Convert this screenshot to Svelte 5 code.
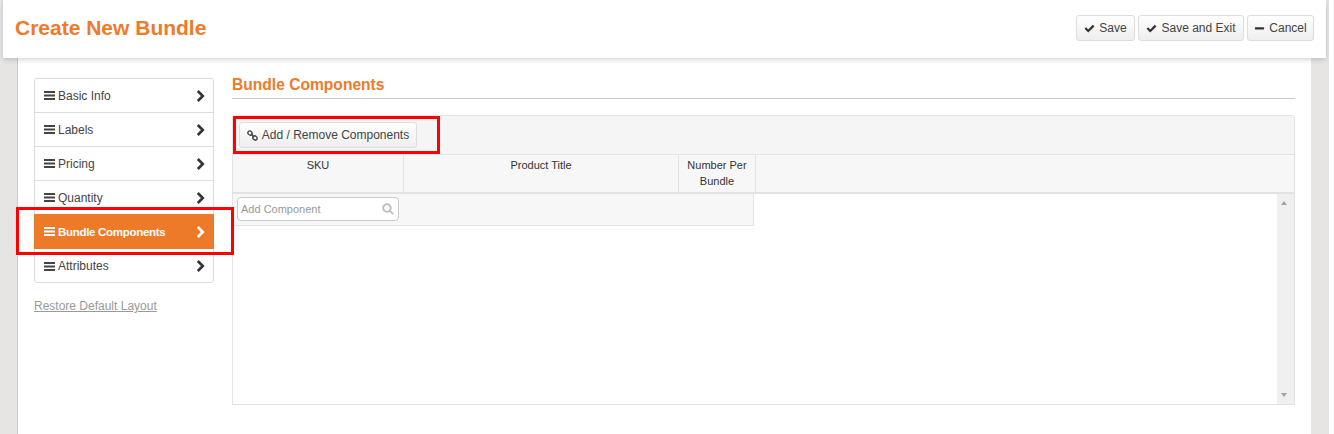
<script lang="ts">
  const navItems = ["Basic Info", "Labels", "Pricing", "Quantity", "Bundle Components", "Attributes"];
  const activeItem = "Bundle Components";
</script>

{#snippet check()}
  <svg class="icon" viewBox="0 0 12 12" aria-hidden="true"><path d="M.6 6.4 2.3 4.7 4.6 7 9.6 2 11.4 3.7 4.6 10.4z" fill="#333" /></svg>
{/snippet}

<div class="page">
  <header class="topbar">
    <h1>Create New Bundle</h1>
    <div class="actions">
      <button type="button" class="save">{@render check()}Save</button>
      <button type="button" class="exit">{@render check()}Save and Exit</button>
      <button type="button" class="cancel">
        <svg class="icon" viewBox="0 0 12 12" aria-hidden="true"><rect x="1" y="4.6" width="10" height="2.4" rx=".5" fill="#333" /></svg>Cancel
      </button>
    </div>
  </header>

  <div class="panel">
    <aside class="side">
      <ul class="nav">
        {#each navItems as item}
          <li class:active={item === activeItem}>
            <svg class="bars" viewBox="0 0 11 9" aria-hidden="true"><path d="M0 0h11v2H0zM0 3.5h11v2H0zM0 7h11v2H0z" /></svg>
            <span>{item}</span>
            <svg class="chev" viewBox="0 0 9 12" aria-hidden="true"><path d="M1.8 1 6.8 6 1.8 11" /></svg>
          </li>
        {/each}
      </ul>
      <a class="restore" href="#restore">Restore Default Layout</a>
    </aside>

    <main class="content">
      <h2>Bundle Components</h2>
      <section class="grid">
        <div class="toolbar">
          <button type="button" class="add">
            <svg class="icon link" viewBox="0 0 12 12" aria-hidden="true">
              <ellipse cx="3.3" cy="3.3" rx="2.5" ry="2.1" transform="rotate(45 3.3 3.3)" />
              <ellipse cx="8.7" cy="8.7" rx="2.5" ry="2.1" transform="rotate(45 8.7 8.7)" />
              <path d="M4.2 4.2 7.8 7.8" />
            </svg>Add / Remove Components
          </button>
        </div>
        <div class="head">
          <div class="col sku">SKU</div>
          <div class="col title">Product Title</div>
          <div class="col num">Number Per Bundle</div>
        </div>
        <div class="body">
          <div class="rows">
            <div class="new-row">
              <div class="search">
                <span>Add Component</span>
                <svg viewBox="0 0 12 12" aria-hidden="true"><circle cx="5" cy="5" r="3.8" /><path d="M7.8 7.8 11.2 11.2" /></svg>
              </div>
            </div>
          </div>
          <div class="scroll">
            <i class="up"></i>
            <i class="down"></i>
          </div>
        </div>
      </section>
    </main>
  </div>

  <div class="mark mark-add"></div>
  <div class="mark mark-nav"></div>
</div>

<style>
  :global(body) { background: #fff; font-family: "Liberation Sans", Arial, sans-serif; }
  .page { position: relative; width: 1329px; height: 434px; overflow: hidden; background: #e6e5e3; color: #333; font-size: 12px; }

  .topbar { position: relative; z-index: 1; display: flex; justify-content: space-between; align-items: flex-start; box-sizing: border-box; width: 1323px; height: 58px; margin-left: 3px; padding: 15px 12px 0; background: #fff; box-shadow: 0 2px 5px rgba(0, 0, 0, .16); }
  h1 { margin: 0; color: #ef7a2a; font-size: 21px; font-weight: 700; line-height: 26px; }
  .actions { display: flex; gap: 3px; }
  button { display: inline-flex; align-items: center; justify-content: center; box-sizing: border-box; height: 26px; padding: 0; border: 1px solid #ddd; border-radius: 3px; background: linear-gradient(#fff, #eee); color: #444; font: 12px "Liberation Sans", Arial, sans-serif; white-space: nowrap; }
  .save { width: 59px; }
  .exit { width: 106px; }
  .cancel { width: 67px; }
  .icon { flex: none; width: 11px; height: 11px; margin-right: 4px; }

  .panel { display: flex; box-sizing: border-box; width: 1294px; height: 376px; margin-left: 17px; padding: 20px 16px 0 16px; border-left: 1px solid #ccc; background: #fff; }

  .side { width: 180px; margin-right: 18px; }
  .nav { margin: 0; padding: 0; list-style: none; border: 1px solid #ddd; border-radius: 3px; box-sizing: border-box; height: 205px; }
  .nav li { display: flex; align-items: center; box-sizing: border-box; height: 34px; padding: 0 8px 0 9px; border-bottom: 1px solid #ddd; color: #444; }
  .nav li:last-child { border-bottom: 0; }
  .nav li.active { height: 35px; margin: -1px -1px 0; padding-left: 10px; padding-right: 9px; border-bottom: 0; background: #ed7a28; color: #fff; font-size: 11.5px; font-weight: 700; letter-spacing: -.3px; }
  .bars { flex: none; width: 11px; height: 9px; margin-right: 3px; fill: #444; }
  .active .bars { fill: #fff; }
  .nav span { flex: 1; }
  .chev { flex: none; width: 9px; height: 12px; fill: none; stroke: #333; stroke-width: 2.6; }
  .active .chev { stroke: #fff; }
  .restore { display: block; margin-top: 16px; color: #999; line-height: 14px; text-decoration: underline; }

  .content { flex: 1; }
  h2 { box-sizing: border-box; height: 25px; margin: -4px 0 16px; padding-top: 1px; border-bottom: 1px solid #ccc; color: #ef7a2a; font-size: 15.6px; font-weight: 700; line-height: 20px; }
  .grid { box-sizing: border-box; width: 1063px; height: 290px; border: 1px solid #e3e3e3; border-radius: 3px 3px 0 0; display: flex; flex-direction: column; }
  .toolbar { flex: none; box-sizing: border-box; height: 39px; padding: 6px 5px 6px 6px; background: #f5f5f5; border-bottom: 1px solid #e3e3e3; }
  .add { width: 178px; }
  .link { fill: none; stroke: #444; stroke-width: 1.5; }

  .head { flex: none; display: flex; box-sizing: border-box; height: 39px; background: #f7f7f7; border-bottom: 2px solid #e3e3e3; font-size: 11px; color: #333; line-height: 16px; text-align: center; }
  .col { box-sizing: border-box; padding-top: 2px; border-right: 1px solid #e3e3e3; }
  .sku { width: 171px; }
  .title { width: 275px; }
  .num { width: 77px; padding-left: 6px; padding-right: 6px; }

  .body { flex: 1; display: flex; min-height: 0; }
  .rows { flex: 1; }
  .new-row { box-sizing: border-box; width: 521px; height: 32px; padding: 3px 4px; background: #f7f7f7; border: solid #e3e3e3; border-width: 0 1px 1px 0; }
  .search { display: flex; align-items: center; justify-content: space-between; box-sizing: border-box; width: 162px; height: 24px; padding: 0 4px 0 3px; background: #fff; border: 1px solid #ccc; border-radius: 4px; color: #999; font-size: 11px; }
  .search svg { width: 12px; height: 12px; fill: none; stroke: #bbb; stroke-width: 1.8; }

  .scroll { position: relative; flex: none; width: 17px; background: #f0f0f0; }
  .scroll i { position: absolute; left: 4px; width: 0; height: 0; border: solid transparent; border-width: 0 3.5px; }
  .up { top: 7px; border-bottom: 4px solid #a3a3a3 !important; }
  .down { bottom: 7px; border-top: 4px solid #a3a3a3 !important; }

  .mark { position: absolute; z-index: 2; box-sizing: border-box; border: 3px solid #f00; pointer-events: none; }
  .mark-add { left: 233px; top: 116px; width: 207px; height: 38px; }
  .mark-nav { left: 16px; top: 207px; width: 218px; height: 48px; }
</style>
